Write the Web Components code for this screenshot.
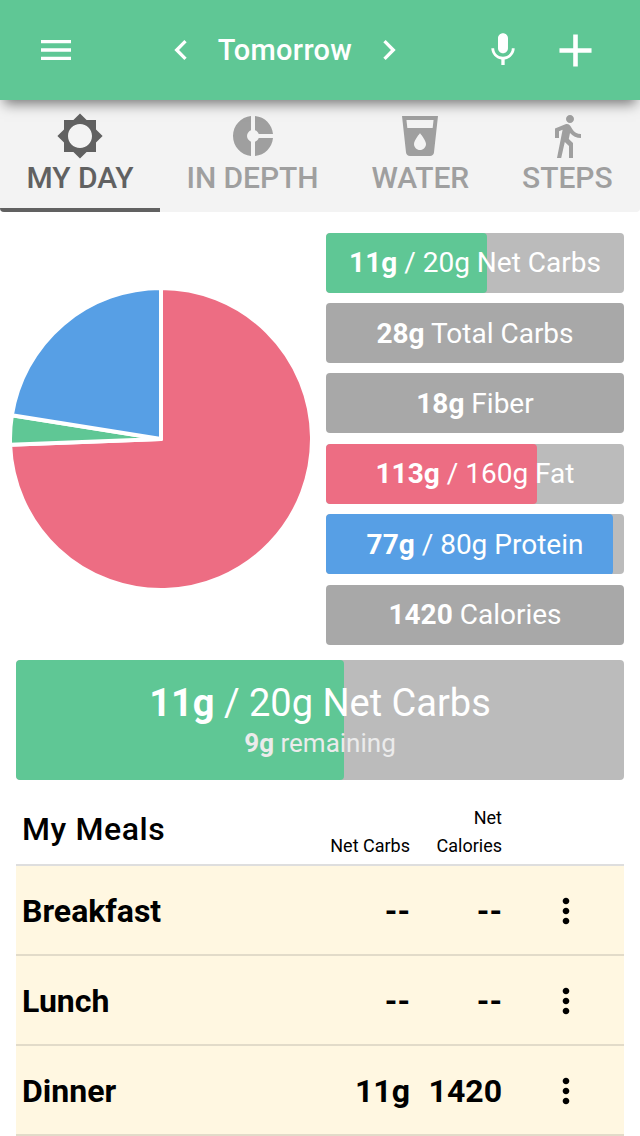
<!DOCTYPE html>
<html lang="en">
<head>
<meta charset="utf-8">
<title>My Day</title>
<style>
  body {
    margin: 0;
    width: 640px;
    height: 1136px;
    overflow: hidden;
    background: #fff;
    font-family: Roboto, "Liberation Sans", sans-serif;
    color: #000;
  }
</style>
</head>
<body>
<day-screen></day-screen>

<script>
const ICONS = {
  menu: 'M3 18h18v-2H3v2zm0-5h18v-2H3v2zm0-7v2h18V6H3z',
  left: 'M15.41 7.41L14 6l-6 6 6 6 1.41-1.41L10.83 12z',
  right: 'M10 6L8.59 7.41 13.17 12l-4.58 4.59L10 18l6-6z',
  mic: 'M12 14c1.66 0 2.99-1.34 2.99-3L15 5c0-1.66-1.34-3-3-3S9 3.34 9 5v6c0 1.66 1.34 3 3 3zm5.3-3c0 3-2.54 5.1-5.3 5.1S6.7 14 6.7 11H5c0 3.41 2.72 6.23 6 6.72V21h2v-3.28c3.28-.48 6-3.3 6-6.72h-1.7z',
  add: 'M19 13h-6v6h-2v-6H5v-2h6V5h2v6h6v2z',
  sun: 'M20 15.31L23.31 12 20 8.69V4h-4.69L12 .69 8.69 4H4v4.69L.69 12 4 15.31V20h4.69L12 23.31 15.31 20H20v-4.69zM12 18c-3.31 0-6-2.69-6-6s2.69-6 6-6 6 2.69 6 6-2.69 6-6 6z',
  donut: 'M11 9.16V2c-5 .5-9 4.79-9 10s4 9.5 9 10v-7.16c-1-.41-2-1.52-2-2.84s1-2.43 2-2.84zM14.86 11H22c-.48-4.75-4-8.53-9-9v7.16c1 .3 1.52.98 1.86 1.84zM13 14.84V22c5-.47 8.52-4.25 9-9h-7.14c-.34.86-.86 1.54-1.86 1.84z',
  drink: 'M3 2l2.01 18.23C5.13 21.23 5.97 22 7 22h10c1.03 0 1.87-.77 1.99-1.77L21 2H3zm9 17c-1.66 0-3-1.34-3-3 0-2 3-5.4 3-5.4s3 3.4 3 5.4c0 1.66-1.34 3-3 3zm6.33-11H5.67l-.44-4h13.55l-.45 4z',
  walk: 'M13.5 5.5c1.1 0 2-.9 2-2s-.9-2-2-2-2 .9-2 2 .9 2 2 2zM9.8 8.9L7 23h2.1l1.8-8 2.1 2v6h2v-7.5l-2.1-2 .6-3C14.8 12 16.8 13 19 13v-2c-1.9 0-3.5-1-4.3-2.4l-1-1.6c-.4-.6-1-1-1.7-1-.3 0-.5.1-.8.1L6 8.3V13h2V9.6l1.8-.7z',
  more: 'M12 8c1.1 0 2-.9 2-2s-.9-2-2-2-2 .9-2 2 .9 2 2 2zm0 2c-1.1 0-2 .9-2 2s.9 2 2 2 2-.9 2-2-.9-2-2-2zm0 6c-1.1 0-2 .9-2 2s.9 2 2 2 2-.9 2-2-.9-2-2-2z'
};

class AppIcon extends HTMLElement {
  connectedCallback() {
    const size = this.getAttribute('size') || 40;
    this.attachShadow({ mode: 'open' }).innerHTML = `
      <style>
        :host { display: block; flex: none; width: ${size}px; height: ${size}px; }
        svg { display: block; width: 100%; height: 100%; fill: currentColor; }
      </style>
      <svg viewBox="0 0 24 24"><path d="${ICONS[this.getAttribute('name')]}"/></svg>
    `;
  }
}
customElements.define('app-icon', AppIcon);

class TopBar extends HTMLElement {
  connectedCallback() {
    this.attachShadow({ mode: 'open' }).innerHTML = `
      <style>
        :host {
          display: grid;
          grid-template-columns: 112px 1fr 188px;
          align-items: center;
          position: relative;
          z-index: 1;
          height: 100px;
          background: #5fc795;
          color: #fff;
          box-shadow: 0 8px 12px -4px rgba(0, 0, 0, .5);
        }
        .menu { justify-self: center; }
        .date { display: flex; align-items: center; padding: 0 0 1px 49px; }
        .title {
          width: 168px;
          text-align: center;
          font-size: 29px;
          font-weight: 500;
          letter-spacing: .3px;
          line-height: 40px;
        }
        .actions { display: flex; align-items: center; padding-left: 31px; gap: 25px; }
      </style>
      <app-icon class="menu" name="menu"></app-icon>
      <div class="date">
        <app-icon name="left"></app-icon>
        <div class="title"><slot></slot></div>
        <app-icon name="right"></app-icon>
      </div>
      <div class="actions">
        <app-icon name="mic"></app-icon>
        <app-icon name="add" size="55"></app-icon>
      </div>
    `;
  }
}
customElements.define('top-bar', TopBar);

class TabItem extends HTMLElement {
  connectedCallback() {
    this.attachShadow({ mode: 'open' }).innerHTML = `
      <style>
        :host {
          display: flex;
          flex: 1 1 auto;
          flex-direction: column;
          align-items: center;
          box-sizing: border-box;
          height: 112px;
          padding-top: 12px;
          border-bottom: 4px solid transparent;
          color: #9f9f9f;
          font-size: 30px;
          font-weight: 500;
          letter-spacing: -.05px;
          line-height: 36px;
          white-space: nowrap;
        }
        :host([active]) { color: #616161; border-bottom-color: #616161; }
      </style>
      <app-icon name="${this.getAttribute('icon')}" size="48"></app-icon>
      <span><slot></slot></span>
    `;
  }
}
customElements.define('tab-item', TabItem);

class TabStrip extends HTMLElement {
  connectedCallback() {
    this.attachShadow({ mode: 'open' }).innerHTML = `
      <style>
        :host {
          display: flex;
          box-sizing: border-box;
          height: 112px;
          padding-right: 1px;
          overflow: hidden;
          background: #f3f3f3;
          border-radius: 0 0 4px 4px;
        }
      </style>
      <slot></slot>
    `;
  }
}
customElements.define('tab-strip', TabStrip);

class MacroPie extends HTMLElement {
  connectedCallback() {
    const slices = JSON.parse(this.getAttribute('slices'));
    const r = 151;
    const point = deg => {
      const a = (deg - 90) * Math.PI / 180;
      return `${(r * Math.cos(a)).toFixed(2)} ${(r * Math.sin(a)).toFixed(2)}`;
    };
    let from = 0;
    const paths = slices.map(([color, deg]) => {
      const to = from + deg;
      const d = `M0 0L${point(from)}A${r} ${r} 0 ${deg > 180 ? 1 : 0} 1 ${point(to)}Z`;
      from = to;
      return `<path fill="${color}" d="${d}"/>`;
    }).join('');
    this.attachShadow({ mode: 'open' }).innerHTML = `
      <style>
        :host { display: block; width: 306px; height: 306px; }
        svg { display: block; }
        path { stroke: #fff; stroke-width: 4; stroke-linejoin: round; }
      </style>
      <svg width="306" height="306" viewBox="-153 -153 306 306">${paths}</svg>
    `;
  }
}
customElements.define('macro-pie', MacroPie);

// Bar with an optional progress fill behind its label
class MacroBar extends HTMLElement {
  connectedCallback() {
    const fill = this.getAttribute('fill');
    const track = fill ? '#bbb' : '#a8a8a8';
    this.attachShadow({ mode: 'open' }).innerHTML = `
      <style>
        :host {
          display: grid;
          height: 60px;
          overflow: hidden;
          border-radius: 4px;
          background: ${track};
          color: #fff;
          font-size: 28px;
          line-height: 60px;
          text-align: center;
          white-space: nowrap;
        }
        :host([large]) { height: 120px; font-size: 38px; line-height: 44px; }
        .fill, .label { grid-area: 1 / 1; }
        .fill {
          width: ${fill || 0}%;
          border-radius: 4px;
          background: ${this.getAttribute('color') || 'none'};
        }
        .label { z-index: 1; padding-top: .55px; }
        :host([large]) .label { padding-top: 21px; }
        .note {
          display: block;
          font-size: 26px;
          line-height: 36px;
          color: #ebebeb;
        }
        :host(:not([large])) .note { display: none; }
      </style>
      <div class="fill"></div>
      <div class="label">
        <slot></slot>
        <span class="note"><slot name="note"></slot></span>
      </div>
    `;
  }
}
customElements.define('macro-bar', MacroBar);

class MealHeader extends HTMLElement {
  connectedCallback() {
    this.attachShadow({ mode: 'open' }).innerHTML = `
      <style>
        :host {
          display: grid;
          grid-template-columns: 296px 92px 92px 1fr;
          box-sizing: border-box;
          height: 72px;
          padding-left: 6px;
          border-bottom: 2px solid #dedede;
          font-size: 18px;
          line-height: 28px;
          text-align: right;
        }
        .title {
          align-self: center;
          font-size: 32px;
          font-weight: 500;
          letter-spacing: .6px;
          text-align: left;
        }
        .col { align-self: end; padding-bottom: 4px; }
      </style>
      <div class="title">My Meals</div>
      <div class="col">Net Carbs</div>
      <div class="col">Net<br>Calories</div>
    `;
  }
}
customElements.define('meal-header', MealHeader);

class MealRow extends HTMLElement {
  connectedCallback() {
    this.attachShadow({ mode: 'open' }).innerHTML = `
      <style>
        :host {
          display: grid;
          grid-template-columns: 302px 86px 92px 1fr;
          align-items: center;
          box-sizing: border-box;
          height: 90px;
          padding: 2px 0 0 6px;
          border-bottom: 2px solid #e2dbc9;
          background: #fff7e1;
          font-size: 32px;
          font-weight: 700;
          line-height: 40px;
          text-align: right;
        }
        .name { text-align: left; }
        app-icon { margin-left: 44px; }
      </style>
      <div class="name"><slot></slot></div>
      <div>${this.getAttribute('carbs') || '--'}</div>
      <div>${this.getAttribute('calories') || '--'}</div>
      <app-icon name="more"></app-icon>
    `;
  }
}
customElements.define('meal-row', MealRow);

class DayScreen extends HTMLElement {
  connectedCallback() {
    this.attachShadow({ mode: 'open' }).innerHTML = `
      <style>
        :host { display: block; }
        .macros {
          display: grid;
          grid-template-columns: 306px 298px;
          gap: 12px;
          align-items: center;
          box-sizing: border-box;
          height: 448px;
          padding: 20.7px 16px 15.4px 8px;
        }
        .bars { display: grid; gap: 10.375px; }
        .summary, .meals { padding: 0 16px; }
        .meals { padding-top: 14px; }
      </style>
      <top-bar>Tomorrow</top-bar>
      <tab-strip>
        <tab-item icon="sun" active>MY DAY</tab-item>
        <tab-item icon="donut">IN DEPTH</tab-item>
        <tab-item icon="drink">WATER</tab-item>
        <tab-item icon="walk">STEPS</tab-item>
      </tab-strip>
      <div class="macros">
        <macro-pie slices='[["#ed6d83", 267.8], ["#5fc795", 11.25], ["#579fe5", 80.95]]'></macro-pie>
        <div class="bars">
          <macro-bar fill="54" color="#5fc795"><b>11g</b> / 20g Net Carbs</macro-bar>
          <macro-bar><b>28g</b> Total Carbs</macro-bar>
          <macro-bar><b>18g</b> Fiber</macro-bar>
          <macro-bar fill="70.8" color="#ed6d83"><b>113g</b> / 160g Fat</macro-bar>
          <macro-bar fill="96.3" color="#579fe5"><b>77g</b> / 80g Protein</macro-bar>
          <macro-bar><b>1420</b> Calories</macro-bar>
        </div>
      </div>
      <div class="summary">
        <macro-bar large fill="54" color="#5fc795">
          <b>11g</b> / 20g Net Carbs
          <span slot="note"><b>9g</b> remaining</span>
        </macro-bar>
      </div>
      <div class="meals">
        <meal-header></meal-header>
        <meal-row>Breakfast</meal-row>
        <meal-row>Lunch</meal-row>
        <meal-row carbs="11g" calories="1420">Dinner</meal-row>
      </div>
    `;
  }
}
customElements.define('day-screen', DayScreen);
</script>
</body>
</html>
